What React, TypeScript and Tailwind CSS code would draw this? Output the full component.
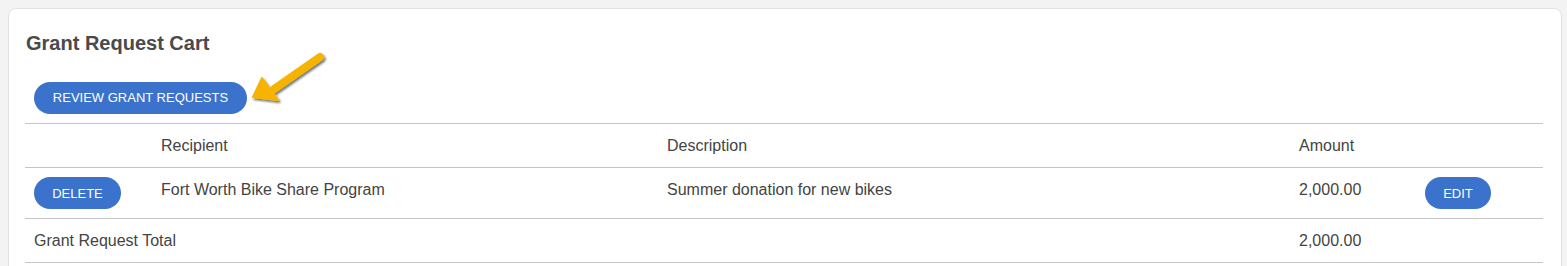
import { ReactNode } from "react";

const pill =
  "inline-flex h-8 items-center justify-center rounded-full bg-[#3b72cc] text-[13px] uppercase text-white";

function Cell({ children, className = "" }: { children?: ReactNode; className?: string }) {
  return <td className={`px-[9px] py-[9px] align-top leading-[25px] ${className}`}>{children}</td>;
}

function Arrow() {
  return (
    <svg
      className="pointer-events-none absolute left-[235px] top-[35px]"
      width="84"
      height="64"
      viewBox="0 0 84 64"
    >
      <defs>
        <filter id="sh" x="-20%" y="-20%" width="150%" height="150%">
          <feDropShadow dx="1.5" dy="2" stdDeviation="1.2" floodColor="#000" floodOpacity="0.55" />
        </filter>
      </defs>
      <g filter="url(#sh)">
        <path d="M76 13 L30 45" stroke="#f6b400" strokeWidth="8" strokeLinecap="round" />
        <path d="M9 53 L18 34 L34 56 Z" fill="#f6b400" stroke="#f6b400" strokeWidth="2" strokeLinejoin="round" />
      </g>
    </svg>
  );
}

export default function App() {
  return (
    <div className="min-h-[266px] bg-[#f3f3f3] p-2 font-['Liberation_Sans',Arial,sans-serif] text-[#444]">
      <div className="relative mr-[-3px] rounded-lg border border-[#e2e2e2] bg-white px-4 pb-4 pt-[22px]">
        <h2 className="pl-px text-[20px] font-bold leading-6 text-[#4a4a4a]">Grant Request Cart</h2>
        <div className="mt-[27px] pl-[9px]">
          <button className={`${pill} w-[213px]`}>Review Grant Requests</button>
        </div>
        <Arrow />
        <table className="mt-[9px] w-[1518px] table-fixed border-collapse text-base">
          <colgroup>
            <col className="w-[127px]" />
            <col className="w-[506px]" />
            <col className="w-[632px]" />
            <col className="w-[126px]" />
            <col className="w-[127px]" />
          </colgroup>
          <tbody>
            <tr className="border-y border-[#c4c4c4]">
              <Cell />
              <Cell>Recipient</Cell>
              <Cell>Description</Cell>
              <Cell>Amount</Cell>
              <Cell />
            </tr>
            <tr className="border-b border-[#c4c4c4]">
              <Cell>
                <button className={`${pill} w-[87px]`}>Delete</button>
              </Cell>
              <Cell>Fort Worth Bike Share Program</Cell>
              <Cell>Summer donation for new bikes</Cell>
              <Cell>2,000.00</Cell>
              <Cell>
                <button className={`${pill} w-[66px]`}>Edit</button>
              </Cell>
            </tr>
            <tr className="border-b border-[#c4c4c4]">
              <Cell className="whitespace-nowrap">Grant Request Total</Cell>
              <Cell />
              <Cell />
              <Cell>2,000.00</Cell>
              <Cell />
            </tr>
          </tbody>
        </table>
      </div>
    </div>
  );
}
